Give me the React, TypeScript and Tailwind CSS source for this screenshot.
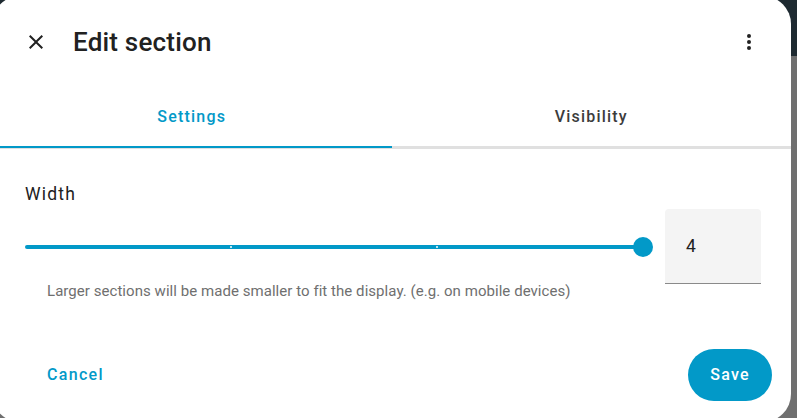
import { useState } from "react";

const BLUE = "#0299c8";

function CloseIcon() {
  return (
    <svg viewBox="0 0 24 24" className="w-6 h-6" fill="#212121">
      <path d="M19,6.41L17.59,5L12,10.59L6.41,5L5,6.41L10.59,12L5,17.59L6.41,19L12,13.41L17.59,19L19,17.59L13.41,12L19,6.41Z" />
    </svg>
  );
}

function DotsIcon() {
  return (
    <svg viewBox="0 0 24 24" className="w-6 h-6" fill="#212121">
      <path d="M12,16A2,2 0 0,1 14,18A2,2 0 0,1 12,20A2,2 0 0,1 10,18A2,2 0 0,1 12,16M12,10A2,2 0 0,1 14,12A2,2 0 0,1 12,14A2,2 0 0,1 10,12A2,2 0 0,1 12,10M12,4A2,2 0 0,1 14,6A2,2 0 0,1 12,8A2,2 0 0,1 10,6A2,2 0 0,1 12,4Z" />
    </svg>
  );
}

export default function App() {
  const [tab, setTab] = useState<"settings" | "visibility">("settings");
  const [value] = useState(4);
  const min = 1;
  const max = 4;
  const ticks = [2, 3];

  return (
    <div
      className="w-[797px] h-[418px] overflow-hidden bg-[linear-gradient(to_bottom,#1e2a31_0px,#1e2a31_56px,#6f6f6f_56px)]"
      style={{ fontFamily: "Roboto, 'Noto Sans', sans-serif" }}
    >
      <div className="-mt-[4px] -ml-[8px] w-[799px] h-[426px] rounded-[28px] bg-white flex flex-col">
        {/* Header */}
        <div className="h-[92px] pt-[34px] pl-[32px] pr-[30px]">
          <div className="h-6 flex items-center">
            <CloseIcon />
            <div className="ml-[25px] flex-1 text-[26px] leading-8 font-medium tracking-[0.2px] text-[#212121]">Edit section</div>
            <DotsIcon />
          </div>
        </div>

        {/* Tabs */}
        <div className="relative flex border-b-[3px] border-[#e0e0e0]">
          {(["settings", "visibility"] as const).map((t) => (
            <div
              key={t}
              onClick={() => setTab(t)}
              className={
                "relative flex-1 h-[58px] flex items-center justify-center text-[16px] font-medium tracking-[1.2px] cursor-pointer " +
                (tab === t ? "text-[#0299c8]" : "text-[#3c3c3c]")
              }
            >
              {t === "settings" ? "Settings" : "Visibility"}
              {tab === t && <div className="absolute left-0 right-0 -bottom-[2px] h-[2px] bg-[#0299c8]" />}
            </div>
          ))}
        </div>

        {/* Content */}
        <div className="flex-1 pt-[33px] pl-[33px] pr-[30px]">
          <div className="text-[17.5px] leading-6 tracking-[1.2px] text-[#212121]">Width</div>
          <div className="mt-[3px] flex items-center h-[75px]">
            <div className="flex-1 relative h-5 pr-[10px] flex items-center">
              <div className="relative w-full h-1 rounded-full" style={{ backgroundColor: BLUE }}>
                {ticks.map((t) => (
                  <div
                    key={t}
                    className="absolute top-[1px] w-[2px] h-[2px] bg-white rounded-full"
                    style={{ left: `calc(${((t - min) / (max - min)) * 100}% - 1px)` }}
                  />
                ))}
                <div
                  className="absolute top-1/2 w-5 h-5 -mt-[10px] -ml-[10px] rounded-full"
                  style={{ left: `${((value - min) / (max - min)) * 100}%`, backgroundColor: BLUE }}
                />
              </div>
            </div>
            <div className="ml-[12px] w-[96px] h-[75px] bg-[#f4f4f4] rounded-t-[4px] border-b border-[#8a8a8a] flex items-center pl-[21px] text-[17.5px] text-[#212121]">
              {value}
            </div>
          </div>
          <div className="ml-[22px] -mt-[3px] text-[15px] leading-5 tracking-[0.05px] text-[#6f6f6f]">
            Larger sections will be made smaller to fit the display. (e.g. on mobile devices)
          </div>
        </div>

        {/* Footer */}
        <div className="flex items-center justify-between pl-[55px] pr-[19px] pb-[21px]">
          <button className="text-[16px] font-medium tracking-[1.3px] text-[#0299c8]">Cancel</button>
          <button className="h-[52px] px-[22px] rounded-full bg-[#0299c8] text-white text-[16px] font-medium tracking-[1.3px]">Save</button>
        </div>
      </div>
    </div>
  );
}
